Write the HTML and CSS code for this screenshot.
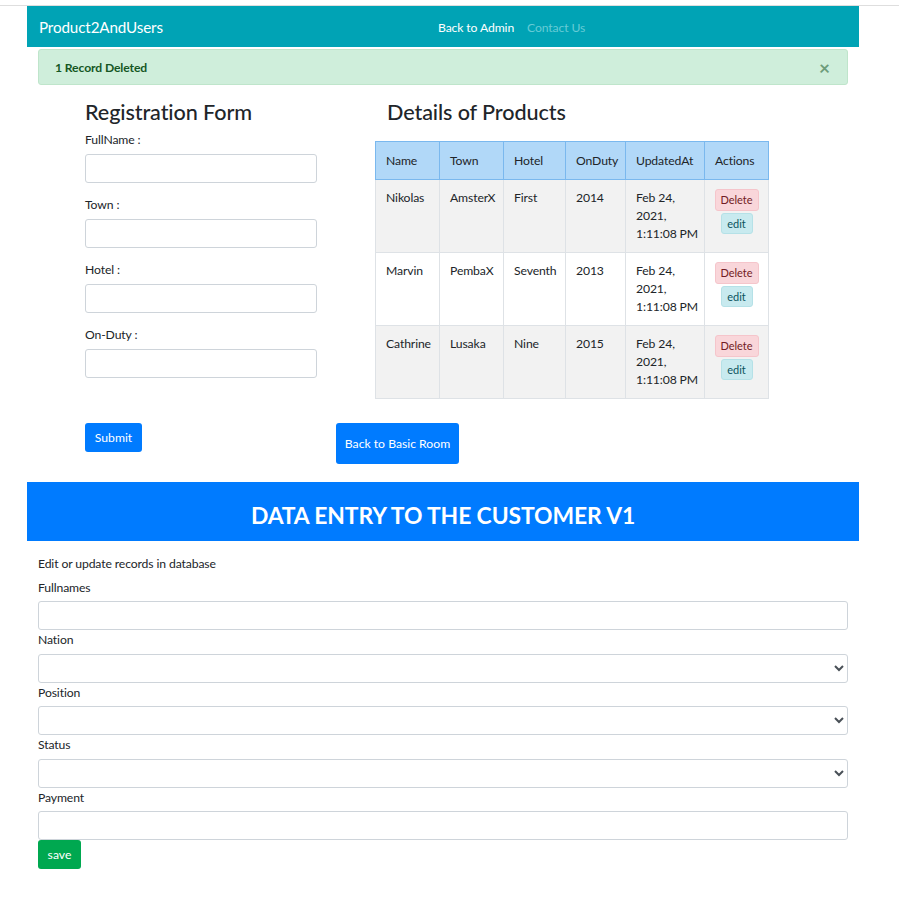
FILE: index.html
```html
<!DOCTYPE html>
<html>
<head>
<meta charset="utf-8">
<title>Product2AndUsers</title>
<link rel="stylesheet" href="styles.css">
</head>
<body>
<div class="topline"></div>
<nav class="navbar">
  <a class="brand">Product2AndUsers</a>
  <div class="nav-links">
    <a class="nav-link active">Back to Admin</a>
    <a class="nav-link muted">Contact Us</a>
  </div>
</nav>
<div class="alert">
  <strong>1 Record Deleted</strong>
  <span class="close">&times;</span>
</div>

<div class="content">
  <div class="reg">
    <h3 class="title">Registration Form</h3>
    <div class="field"><label>FullName :</label><input class="input" type="text"></div>
    <div class="field"><label>Town :</label><input class="input" type="text"></div>
    <div class="field"><label>Hotel :</label><input class="input" type="text"></div>
    <div class="field"><label>On-Duty :</label><input class="input" type="text"></div>
  </div>
  <div class="details">
    <h3 class="title title-pad">Details of Products</h3>
    <table class="table">
      <thead>
        <tr>
          <th class="c-name">Name</th>
          <th class="c-town">Town</th>
          <th class="c-hotel">Hotel</th>
          <th class="c-duty">OnDuty</th>
          <th class="c-upd">UpdatedAt</th>
          <th class="c-act">Actions</th>
        </tr>
      </thead>
      <tbody>
        <tr class="striped">
          <td>Nikolas</td><td>AmsterX</td><td>First</td><td>2014</td>
          <td>Feb 24, 2021, <span class="nw">1:11:08 PM</span></td>
          <td><div class="actions"><button class="btn-del">Delete</button><button class="btn-edit">edit</button></div></td>
        </tr>
        <tr>
          <td>Marvin</td><td>PembaX</td><td>Seventh</td><td>2013</td>
          <td>Feb 24, 2021, <span class="nw">1:11:08 PM</span></td>
          <td><div class="actions"><button class="btn-del">Delete</button><button class="btn-edit">edit</button></div></td>
        </tr>
        <tr class="striped">
          <td>Cathrine</td><td>Lusaka</td><td>Nine</td><td>2015</td>
          <td>Feb 24, 2021, <span class="nw">1:11:08 PM</span></td>
          <td><div class="actions"><button class="btn-del">Delete</button><button class="btn-edit">edit</button></div></td>
        </tr>
      </tbody>
    </table>
  </div>
</div>

<div class="button-row">
  <button class="btn btn-submit">Submit</button>
  <button class="btn btn-back">Back to Basic Room</button>
</div>

<div class="banner"><h2>DATA ENTRY TO THE CUSTOMER V1</h2></div>

<div class="entry">
  <p class="intro">Edit or update records in database</p>
  <label>Fullnames</label>
  <input class="input" type="text">
  <label>Nation</label>
  <select class="input select"><option></option></select>
  <label>Position</label>
  <select class="input select"><option></option></select>
  <label>Status</label>
  <select class="input select"><option></option></select>
  <label>Payment</label>
  <input class="input" type="text">
  <button class="btn btn-save">save</button>
</div>
</body>
</html>
```

FILE: styles.css
```css
* { box-sizing: border-box; }

body {
  margin: 0;
  font-family: Lato, "Open Sans", "Noto Sans", sans-serif;
  font-size: 12.2px;
  letter-spacing: -0.12px;
  line-height: 19px;
  color: #212529;
  background: #fff;
}

.topline {
  height: 6px;
  border-bottom: 1px solid #dedede;
}

.navbar {
  margin-left: 27px;
  width: 832px;
  height: 41px;
  background: #00a3b5;
  display: flex;
  align-items: center;
  padding: 0 12px;
}

.brand {
  flex: none;
  width: 399px;
  font-size: 15.2px;
  color: #fff;
  padding-top: 2px;
}

.nav-links {
  display: flex;
  gap: 13px;
  padding-top: 2px;
}

.nav-link.active { color: #fff; }
.nav-link.muted { color: #66cbd6; }

.alert {
  margin: 2px 0 0 38px;
  width: 810px;
  height: 36px;
  background: #cfeedb;
  border: 1px solid #bfe5cb;
  border-radius: 3px;
  color: #155724;
  display: flex;
  align-items: center;
  justify-content: space-between;
  padding: 0 16px;
}

.alert strong { font-weight: 700; }

.close {
  font-size: 19px;
  font-weight: 700;
  color: #6d9c7a;
  margin-right: 1px;
}

.content {
  display: flex;
  align-items: flex-start;
  padding-left: 85px;
  margin-top: 14px;
}

.title {
  margin: 0 0 4px;
  font-size: 21.6px;
  letter-spacing: -0.1px;
  line-height: 27px;
  font-weight: 500;
}

.title-pad { padding-left: 12px; margin-bottom: 15px; }

.reg { width: 232px; flex: none; }

.field { margin-bottom: 12.5px; }

label {
  display: block;
  line-height: 19px;
}

.input {
  display: block;
  width: 100%;
  height: 29px;
  margin-top: 4.5px;
  border: 1px solid #ced4da;
  border-radius: 3px;
  background: #fff;
  font: inherit;
}

.details { margin-left: 58px; }

.table {
  border-collapse: collapse;
  table-layout: fixed;
  width: 393px;
}

.table th, .table td {
  text-align: left;
  vertical-align: top;
  font-weight: 400;
  line-height: 18px;
  padding: 9px 10px;
  border: 1px solid #dee2e6;
}

.table th {
  background: #b1d8f8;
  border-color: #7ab8ee;
  padding: 9.5px 10px;
}

.nw { white-space: nowrap; }

.c-name { width: 64px; }
.c-town { width: 64px; }
.c-hotel { width: 62px; }
.c-duty { width: 60px; }
.c-upd { width: 79px; }
.c-act { width: 64px; }

.striped td { background: #f2f2f2; }

.actions {
  display: flex;
  flex-direction: column;
  align-items: center;
  gap: 2px;
}

.btn-del, .btn-edit {
  font: inherit;
  font-size: 11px;
  line-height: 16px;
  border-radius: 3px;
  padding: 0;
  cursor: pointer;
}

.btn-del {
  height: 22px;
  width: 44px;
  background: #f9d6da;
  border: 1px solid #f5c5cb;
  color: #721c24;
}

.btn-edit {
  height: 21px;
  width: 32px;
  background: #c8eaef;
  border: 1px solid #b5e1e7;
  color: #0c5460;
}

.button-row {
  display: flex;
  align-items: flex-start;
  padding-left: 85px;
  margin-top: 24px;
}

.btn {
  font: inherit;
  color: #fff;
  border: none;
  border-radius: 3px;
  cursor: pointer;
}

.btn-submit {
  background: #007bff;
  height: 29px;
  width: 57px;
  padding: 0;
}

.btn-back {
  background: #007bff;
  height: 41px;
  width: 123px;
  padding: 0;
  margin-left: 194px;
}

.banner {
  margin: 18px 0 0 27px;
  width: 832px;
  height: 59px;
  background: #007bff;
  display: flex;
  align-items: center;
  justify-content: center;
}

.banner h2 {
  margin: 0;
  padding-top: 7px;
  color: #fff;
  font-size: 22.9px;
  font-weight: 700;
  line-height: 30px;
}

.entry {
  margin-left: 38px;
  width: 810px;
  padding-top: 12.5px;
}

.intro {
  margin: 0 0 5px;
  line-height: 19px;
}

.select {
  padding: 0 8px;
  color: #495057;
}

.btn-save {
  display: block;
  background: #00a850;
  height: 29px;
  width: 43px;
  padding: 0;
}
```
